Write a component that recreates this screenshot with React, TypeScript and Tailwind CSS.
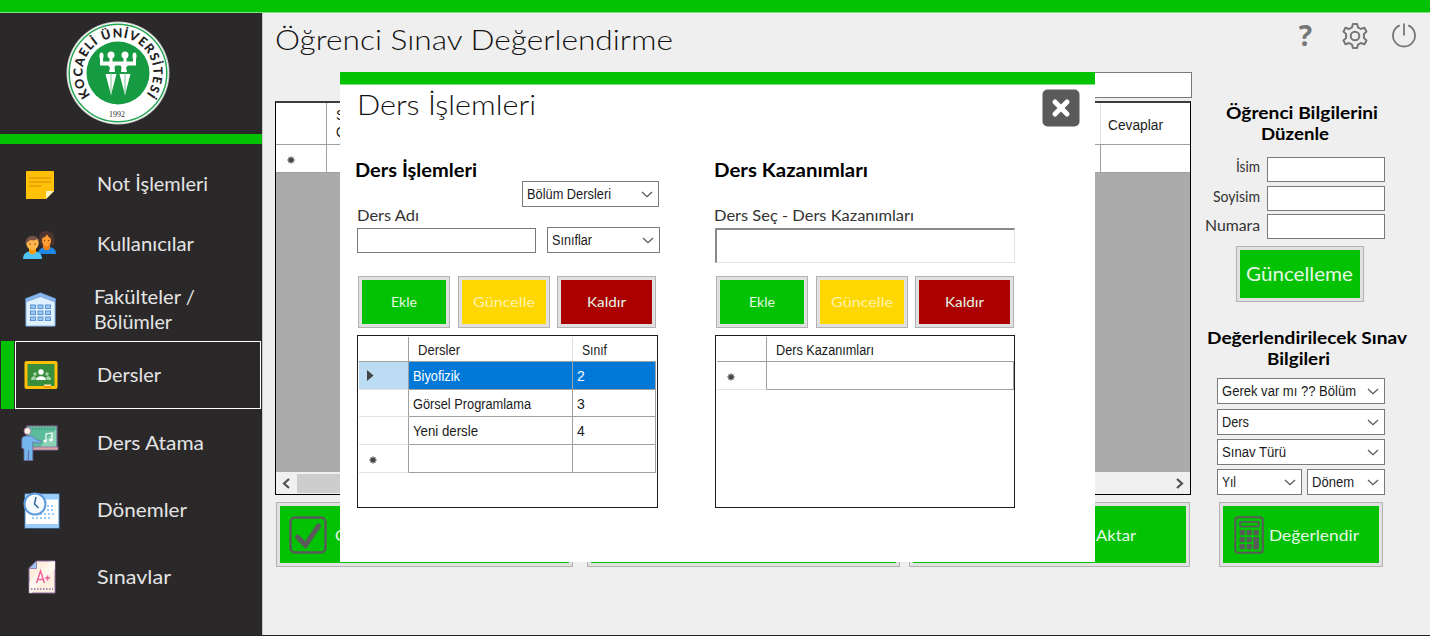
import React, { useLayoutEffect, useRef } from "react";

/* A one-line caption whose glyphs are stretched or condensed to fill `w` pixels. */
function Label({ w, className = "", children }: { w: number; className?: string; children: string }) {
  const ref = useRef<HTMLSpanElement>(null);
  useLayoutEffect(() => {
    const el = ref.current;
    if (!el) return;
    el.style.transform = "none";
    const natural = el.getBoundingClientRect().width;
    el.style.transform = `scaleX(${w / natural})`;
  }, [w, children]);
  return (
    <span className={`block shrink-0 whitespace-nowrap ${className}`} style={{ width: w }}>
      <span ref={ref} className="inline-block origin-left align-top">{children}</span>
    </span>
  );
}

const gothic = "font-['Lato',sans-serif]";
const sans = "font-['Liberation_Sans',sans-serif] text-[14px] text-[#1a1a1a]";

function Chevron() {
  return (
    <svg width="12" height="7" viewBox="0 0 12 7" className="shrink-0">
      <path d="M1 1l5 4.600L11 1" fill="none" stroke="#555" strokeWidth="1.200" />
    </svg>
  );
}

function Combo({ text, w, className }: { text: string; w: number; className: string }) {
  return (
    <div className={`flex h-[26px] shrink-0 items-center justify-between border border-[#7a7a7a] bg-white pr-[5px] pl-[4px] ${className}`}>
      <Label w={w} className={`${sans} leading-[24px]`}>{text}</Label>
      <Chevron />
    </div>
  );
}

function Button({ className, fill, children }: { className: string; fill: string; children?: React.ReactNode }) {
  return (
    <div className={`shrink-0 border border-[#b2b2b2] bg-[#e1e1e1] p-[3px] ${className}`}>
      <div className={`flex h-full items-center text-[#e6f7e6] ${fill}`}>{children}</div>
    </div>
  );
}

function NoteIcon() {
  return (
    <svg width="30" height="30" viewBox="0 0 30 30">
      <path d="M1 1h28v20l-8 8H1z" fill="#ffc107" />
      <path d="M21 29v-8h8z" fill="#fff3c0" />
      <path d="M4 8h22M4 12h22M4 16h12" stroke="#e59a00" strokeWidth="1.400" />
    </svg>
  );
}

function UsersIcon() {
  return (
    <svg width="34" height="30" viewBox="0 0 34 30">
      <path d="M16 9c0-6 3-8 7-8 6 0 9 4 8 9 1 3 0 5-2 6H18z" fill="#4e342e" />
      <path d="M15 24c0-4 3-6 6-7h6c4 1 6 3 6 7z" fill="#1e88e5" />
      <path d="M20 15h7v3c-1 3-5 3-7 0z" fill="#ef7d16" />
      <ellipse cx="23.500" cy="10.500" rx="4.500" ry="6" fill="#ff9d33" />
      <path d="M18 8c2 0 5-1 6-4 1 2 2 4 5 5V5l-5-3-5 2z" fill="#4e342e" />
      <path d="M0 29c0-5 3-7 7-8h5c4 1 7 3 7 8z" fill="#4fc3f7" />
      <path d="M6 19h7v3c-1 3-6 3-7 0z" fill="#ff9800" />
      <circle cx="9.500" cy="12.500" r="6.800" fill="#795548" />
      <path d="M3.500 13l4-3c3 1 5 0 7-1l1 4c0 4-2.500 7-6 7s-6-3-6-7z" fill="#ffb74d" />
      <circle cx="7" cy="14" r=".8" fill="#784719" />
      <circle cx="12" cy="14" r=".8" fill="#784719" />
      <circle cx="21.500" cy="10.500" r=".7" fill="#784719" />
      <circle cx="25.500" cy="10.500" r=".7" fill="#784719" />
    </svg>
  );
}

function BuildingIcon() {
  return (
    <svg width="31" height="35" viewBox="0 0 31 35">
      <path d="M1 7L15.500 1 30 7v27H1z" fill="#dff0fe" stroke="#8bb7f0" />
      <path d="M.5 6.500L15.500 1l15 5.500V10l-15-5.500L.5 10z" fill="#8bb7f0" stroke="#4e7ab5" strokeWidth=".5" />
      {[13, 19, 25].map((y) =>
        [5.5, 13, 20.5].map((x) => (
          <rect key={`${x}-${y}`} x={x} y={y} width="5" height="3.500" fill="#9cc8f5" stroke="#5e93cf" strokeWidth="1" />
        ))
      )}
    </svg>
  );
}

function ClassIcon() {
  return (
    <svg width="34" height="30" viewBox="0 0 34 30">
      <rect x=".5" y="1" width="33" height="28" rx="2" fill="#ffc107" />
      <rect x="3.500" y="4" width="27" height="22" fill="#388e3c" />
      <circle cx="17" cy="12" r="2.700" fill="#fff" />
      <path d="M12 20c0-5 10-5 10 0z" fill="#fff" />
      <circle cx="11" cy="14" r="1.700" fill="#a5d6a7" />
      <circle cx="23" cy="14" r="1.700" fill="#a5d6a7" />
      <path d="M7 20c0-5 5-4 5-2l-1 2zM27 20c0-5-5-4-5-2l1 2z" fill="#a5d6a7" />
      <path d="M20 26h7v-1.500h-7z" fill="#ffe7b0" />
      <path d="M20 26h7v2h-7z" fill="#ff9800" />
    </svg>
  );
}

function TeacherIcon() {
  return (
    <svg width="38" height="36" viewBox="0 0 38 36">
      <rect x="6" y="1" width="30" height="22" fill="#5bbd9b" stroke="#8d6c9f" />
      <path d="M19 22L35 4v18z" fill="#88d3b6" />
      <path d="M8 4h26" stroke="#3d7a67" strokeDasharray="1.500 1.500" />
      <rect x="6" y="22" width="31" height="3" fill="#dba5a8" stroke="#8d6c9f" strokeWidth=".8" />
      <path d="M25 16V9l6-1v7" fill="none" stroke="#fff" strokeWidth="1.200" />
      <circle cx="24" cy="16" r="1.600" fill="#fff" />
      <circle cx="30" cy="15" r="1.600" fill="#fff" />
      <circle cx="6.500" cy="6" r="3.500" fill="#ffeedd" stroke="#8d6c9f" strokeWidth=".8" />
      <path d="M.8 23V15c0-3 2-4 4-4h6l5 4 4 .5c1 2-1 3-3 2.500l-5-1v18.500H7.500V25l-.5 10.500H3V24z" fill="#72b8ee" stroke="#6d6c9f" strokeWidth=".8" />
    </svg>
  );
}

function TermIcon() {
  return (
    <svg width="37" height="37" viewBox="0 0 37 37">
      <rect x="2" y="2" width="34" height="34" fill="#fff" stroke="#4788c7" />
      <path d="M2.500 2.500h33v5h-33zM2.500 32h33v3.500h-33z" fill="#98ccfd" />
      <path d="M20 14h11M20 18h11M9 22h22M9 26h18" stroke="#98ccfd" strokeWidth="2" strokeDasharray="2 2" />
      <circle cx="12" cy="12" r="10.500" fill="#f5faff" stroke="#5e9ddd" strokeWidth="2" />
      <path d="M13 5l-1.500 7 4 4" fill="none" stroke="#33669c" strokeWidth="1.500" />
    </svg>
  );
}

function ExamIcon() {
  return (
    <svg width="28" height="34" viewBox="0 0 28 34">
      <path d="M8.500 1H27v32H1V8.500z" fill="#fdeee0" stroke="#8d6c9f" />
      <path d="M1.500 22L22 1.500h5V9L3 33H1.500z" fill="#fff7ee" />
      <path d="M8.500 1v7.500H1z" fill="#9bc9f2" stroke="#8d6c9f" strokeWidth=".8" />
      <path d="M3 29h22" stroke="#8d6c9f" strokeWidth="1.500" strokeDasharray="1.500 1.500" />
      <path d="M8.500 23l4-12 4 12M9.800 19.500h5.500M17 18h5M19.500 15.500v5" fill="none" stroke="#f0609a" strokeWidth="1.500" />
    </svg>
  );
}

function Logo() {
  return (
    <svg width="104" height="104" viewBox="0 0 104 104">
      <circle cx="52" cy="52" r="51.500" fill="#c9ccc9" />
      <circle cx="52" cy="52" r="50.500" fill="#fff" />
      <circle cx="52" cy="52" r="48.800" fill="none" stroke="#26a653" strokeWidth="1.500" />
      <circle cx="52" cy="52" r="31.500" fill="#169b43" />
      <defs>
        <path id="rim" d="M24.400 74.200A35.500 35.500 0 1 1 79.600 74.200" />
      </defs>
      <text fontFamily="Lato, sans-serif" fontWeight="900" fontSize="12.500" fill="#222">
        <textPath href="#rim" startOffset="0" textLength="158">KOCAELİ ÜNİVERSİTESİ</textPath>
      </text>
      <text x="51" y="95.500" textAnchor="middle" fontFamily="Liberation Serif, serif" fontSize="8" fill="#333">1992</text>
      <g fill="#fff">
        <circle cx="45" cy="34" r="3.500" />
        <circle cx="59" cy="34" r="3.500" />
        <ellipse cx="35.500" cy="35" rx="2" ry="3.500" />
        <ellipse cx="68.500" cy="35" rx="2" ry="3.500" />
        <path d="M34 38h3v2.500h6.500v-4h3v4h11v-4h3v4h6.500V38h3v6.500h-8l-2 2 1 4.500h-6l.5-5-1-1.500h-5l-1 1.500.5 5h-6l1-4.500-2-2h-8z" />
        <path d="M39.500 53h11L45 74zM53.500 53h11L59 74z" />
      </g>
      <path d="M45 52v22M59 52v22" stroke="#7cc795" strokeWidth="1" />
    </svg>
  );
}

type MenuItem = { lines: [string, number][]; icon: React.ReactNode; row: string; pad: string; active?: boolean };

const menu: MenuItem[] = [
  { lines: [["Not İşlemleri", 111]], icon: <NoteIcon />, row: "h-[60px] pb-px", pad: "ml-[25px]" },
  { lines: [["Kullanıcılar", 97]], icon: <UsersIcon />, row: "h-[59px]", pad: "ml-[23px]" },
  { lines: [["Fakülteler /", 101], ["Bölümler", 78]], icon: <BuildingIcon />, row: "h-[67px] pt-[4px]", pad: "ml-[25px]" },
  { lines: [["Dersler", 64]], icon: <ClassIcon />, row: "h-[68px]", pad: "ml-[8px]", active: true },
  { lines: [["Ders Atama", 107]], icon: <TeacherIcon />, row: "h-[68px]", pad: "ml-[21px]" },
  { lines: [["Dönemler", 90]], icon: <TermIcon />, row: "h-[67px]", pad: "ml-[23px]" },
  { lines: [["Sınavlar", 74]], icon: <ExamIcon />, row: "h-[66px]", pad: "ml-[28px]" },
];

function Sidebar() {
  return (
    <aside className="flex w-[263px] shrink-0 flex-col border-r border-[#c8c8c8] bg-[#2b2829]">
      <div className="flex h-[121px] items-start pt-[8px] pl-[66px]"><Logo /></div>
      <div className="h-[10px] shrink-0 bg-[#03c103]" />
      <nav className="flex flex-col pt-[11px]">
        {menu.map((m) => {
          const body = (
            <>
              <div className={`shrink-0 ${m.active ? "w-[81px]" : "w-[97px]"}`}>
                <div className={m.pad}>{m.icon}</div>
              </div>
              <div className={`${gothic} pb-[2px] text-[19px] leading-[25px] text-[#e4e4e4] ${m.lines.length > 1 ? "-ml-[3px]" : ""}`}>
                {m.lines.map(([t, w]) => <Label key={t} w={w}>{t}</Label>)}
              </div>
            </>
          );
          return m.active ? (
            <div key={m.lines[0][0]} className={`flex ${m.row}`}>
              <div className="ml-px w-[13px] bg-[#03c103]" />
              <div className="ml-px flex w-[246px] items-center border border-white">{body}</div>
            </div>
          ) : (
            <div key={m.lines[0][0]} className={`flex items-center ${m.row}`}>{body}</div>
          );
        })}
      </nav>
    </aside>
  );
}

function NewRowMark() {
  return (
    <svg width="8" height="8" viewBox="0 0 8 8">
      <path d="M4 .5v7M.5 4h7M1.500 1.500l5 5M6.500 1.500l-5 5" stroke="#444" strokeWidth="1.300" />
    </svg>
  );
}

function ResultsGrid() {
  return (
    <div className="mt-[3px] flex h-[394px] w-[916px] flex-col border border-t-2 border-black border-t-[#3c3c3c] bg-[#ababab]">
      <div className="flex h-[42px] shrink-0 border-b border-[#a0a0a0] bg-white">
        <div className="w-[51px] border-r border-[#a0a0a0]" />
        <div className={`w-[774px] border-r border-[#e0e0e0] pt-[4px] pl-[9px] leading-[17px] ${sans}`}>
          <Label w={9}>S</Label>
          <Label w={10}>O</Label>
        </div>
        <div className="pt-[13px] pl-[7px]"><Label w={55} className={`${sans} leading-[18px]`}>Cevaplar</Label></div>
      </div>
      <div className="flex h-[28px] shrink-0 border-b border-[#a0a0a0] bg-white">
        <div className="flex w-[51px] items-center border-r border-[#a0a0a0] pt-[2px] pl-[11px]"><NewRowMark /></div>
        <div className="w-[774px] border-r border-[#a0a0a0]" />
      </div>
      <div className="mt-auto flex h-[22px] items-center justify-between bg-[#f0f0f0]">
        <svg width="21" height="21" viewBox="0 0 21 21"><path d="M13 6l-5 4.500 5 4.500" fill="none" stroke="#505050" strokeWidth="2.200" /></svg>
        <div className="mr-auto h-[19px] w-[560px] bg-[#cdcdcd]" />
        <svg width="21" height="21" viewBox="0 0 21 21"><path d="M8 6l5 4.500L8 15" fill="none" stroke="#505050" strokeWidth="2.200" /></svg>
      </div>
    </div>
  );
}

function CalculatorIcon() {
  return (
    <svg width="30" height="38" viewBox="0 0 30 38">
      <rect x="1.200" y="1.200" width="27.600" height="35.600" rx="3" fill="none" stroke="#5a5a5a" strokeWidth="2" />
      <rect x="6" y="6" width="18.500" height="4.500" fill="none" stroke="#5a5a5a" strokeWidth="1.700" />
      {[14, 21, 28].map((y) => [5.5, 12.5, 19.5].map((x) => <rect key={`${x}-${y}`} x={x} y={y} width="5.300" height="5.300" rx="1" fill="#5a5a5a" />))}
      <rect x="19.500" y="21" width="5.300" height="12.300" rx="1" fill="#5a5a5a" />
    </svg>
  );
}

function Field({ text, w, className, top }: { text: string; w: number; className: string; top: string }) {
  return (
    <div className={`flex w-[192px] justify-end ${className}`}>
      <Label w={w} className={`${gothic} ${top} text-[14.500px] leading-[20px] text-[#333]`}>{text}</Label>
      <div className="ml-[7px] h-[25px] w-[118px] border border-[#7a7a7a] bg-white" />
    </div>
  );
}

function SidePanel() {
  const heading = `${gothic} text-[17px] font-bold leading-[21px] text-black`;
  return (
    <section className="flex w-[237px] flex-col">
      <Label w={152} className={`${heading} mt-[30px] ml-[33px]`}>Öğrenci Bilgilerini</Label>
      <Label w={68} className={`${heading} ml-[68px]`}>Düzenle</Label>
      <Field text="İsim" w={24} className="mt-[13px]" top="" />
      <Field text="Soyisim" w={47} className="mt-[4px]" top="pt-px" />
      <Field text="Numara" w={55} className="mt-[3px]" top="pt-[2px]" />
      <Button className="mt-[7px] ml-[43px] h-[56px] w-[128px]" fill="bg-[#03c103]">
        <Label w={107} className={`${gothic} ml-[6px] text-[19px] leading-[24px]`}>Güncelleme</Label>
      </Button>
      <Label w={200} className={`${heading} mt-[25px] ml-[14px]`}>Değerlendirilecek Sınav</Label>
      <Label w={63} className={`${heading} ml-[74px]`}>Bilgileri</Label>
      <div className="ml-[24px] flex w-[168px] flex-col pt-[9px]">
        <Combo text="Gerek var mı ?? Bölüm" w={134} className="" />
        <Combo text="Ders" w={27} className="mt-[5px]" />
        <Combo text="Sınav Türü" w={64} className="mt-[4px]" />
        <div className="mt-[4px] flex justify-between">
          <Combo text="Yıl" w={14} className="w-[85px]" />
          <Combo text="Dönem" w={42} className="w-[78px]" />
        </div>
      </div>
      <Button className="mt-[7px] ml-[26px] h-[65px] w-[164px]" fill="bg-[#03c103]">
        <span className="ml-[11px] block"><CalculatorIcon /></span>
        <Label w={90} className={`${gothic} ml-[5px] text-[16px] leading-[22px]`}>Değerlendir</Label>
      </Button>
    </section>
  );
}

function CrudButtons({ className }: { className: string }) {
  const face = `${gothic} text-[14px] leading-[20px] mx-auto`;
  return (
    <div className={`flex justify-between ${className}`}>
      <Button className="h-[52px] w-[92px]" fill="bg-[#03c103]"><Label w={26} className={face}>Ekle</Label></Button>
      <Button className="h-[52px] w-[92px]" fill="bg-[#ffd700]"><Label w={62} className={`${face} text-[#fff3b0]`}>Güncelle</Label></Button>
      <Button className="h-[52px] w-[99px]" fill="bg-[#aa0000]"><Label w={39} className={face}>Kaldır</Label></Button>
    </div>
  );
}

function CoursesGrid() {
  const rows: [string, string, number][] = [["Biyofizik", "2", 47], ["Görsel Programlama", "3", 118], ["Yeni dersle", "4", 65]];
  return (
    <div className={`mt-[7px] ml-[17px] h-[173px] w-[301px] border border-[#1c1c1c] bg-white ${sans}`}>
      <div className="mt-px ml-px w-[297px]">
        <div className="flex h-[25px] border-b border-[#a0a0a0] leading-[26px]">
          <div className="w-[50px] border-r border-[#a0a0a0]" />
          <div className="w-[164px] border-r border-[#e0e0e0] pl-[9px]"><Label w={42}>Dersler</Label></div>
          <div className="pl-[9px]"><Label w={25}>Sınıf</Label></div>
        </div>
        {rows.map(([name, cls, w], i) => (
          <div key={name} className={`flex leading-[28px] ${i === 0 ? "h-[28px] text-white" : i === 1 ? "h-[27px]" : "h-[28px]"}`}>
            <div className={`flex w-[50px] items-center border-r border-b border-r-[#a0a0a0] border-b-[#e3e3e3] pl-[8px] ${i === 0 ? "bg-[#bcdcf4]" : ""}`}>
              {i === 0 && <svg width="7" height="11" viewBox="0 0 7 11"><path d="M0 0l6.500 5.500L0 11z" fill="#444" /></svg>}
            </div>
            <div className={`w-[164px] border-r border-b border-[#a0a0a0] pl-[4px] ${i === 0 ? "bg-[#0078d7]" : ""}`}><Label w={w}>{name}</Label></div>
            <div className={`w-[83px] border-r border-b border-[#a0a0a0] pl-[4px] ${i === 0 ? "bg-[#0078d7]" : ""}`}>{cls}</div>
          </div>
        ))}
        <div className="flex h-[28px]">
          <div className="flex w-[50px] items-center border-r border-b border-r-[#a0a0a0] border-b-[#e3e3e3] pt-[2px] pl-[10px]"><NewRowMark /></div>
          <div className="w-[164px] border-r border-b border-[#a0a0a0]" />
          <div className="w-[83px] border-r border-b border-[#a0a0a0]" />
        </div>
      </div>
    </div>
  );
}

function OutcomesGrid() {
  return (
    <div className={`mt-[7px] h-[173px] w-[300px] border border-[#1c1c1c] bg-white ${sans}`}>
      <div className="mt-px ml-px w-[297px]">
        <div className="flex h-[25px] border-b border-[#a0a0a0] leading-[26px]">
          <div className="w-[50px] border-r border-[#a0a0a0]" />
          <div className="pl-[9px]"><Label w={98}>Ders Kazanımları</Label></div>
        </div>
        <div className="flex h-[28px]">
          <div className="flex w-[50px] items-center border-r border-b border-r-[#a0a0a0] border-b-[#e3e3e3] pt-[2px] pl-[10px]"><NewRowMark /></div>
          <div className="w-[247px] border-r border-b border-[#a0a0a0]" />
        </div>
      </div>
    </div>
  );
}

function CourseDialog() {
  const heading = `${gothic} text-[19px] font-bold leading-[24px] text-black`;
  const caption = `${gothic} text-[15.500px] leading-[20px] text-[#333]`;
  return (
    <div className="absolute top-[72px] left-[340px] flex h-[490px] w-[755px] flex-col bg-white">
      <div className="h-[13px] shrink-0 border-b border-[#7fe07f] bg-[#03c103]" />
      <div className="flex h-[73px] shrink-0 items-start justify-between pr-[15px] pl-[17px]">
        <Label w={179} className={`${gothic} mt-[2px] text-[28px] leading-[34px] font-light text-[#111]`}>Ders İşlemleri</Label>
        <svg width="38" height="38" viewBox="0 0 38 38" className="mt-[4px]">
          <rect x=".5" y=".5" width="37" height="37" rx="5" fill="#5a5a5a" />
          <path d="M13 13l12 12M25 13l-12 12" stroke="#fff" strokeWidth="5" strokeLinecap="round" />
        </svg>
      </div>
      <div className="flex">
        <div className="w-[375px]">
          <Label w={122} className={`${heading} ml-[15px]`}>Ders İşlemleri</Label>
          <Combo text="Bölüm Dersleri" w={84} className="-mt-px ml-[182px] w-[137px]" />
          <Label w={62} className={`${caption} -mt-[2px] ml-[17px]`}>Ders Adı</Label>
          <div className="mt-[2px] ml-[17px] flex w-[303px] items-end justify-between">
            <div className="h-[25px] w-[179px] border border-[#7a7a7a] bg-white" />
            <Combo text="Sınıflar" w={40} className="w-[113px]" />
          </div>
          <CrudButtons className="mt-[23px] ml-[18px] w-[298px]" />
          <CoursesGrid />
        </div>
        <div>
          <Label w={154} className={`${heading} -ml-px`}>Ders Kazanımları</Label>
          <Label w={200} className={`${caption} mt-[23px] -ml-px`}>Ders Seç - Ders Kazanımları</Label>
          <div className="mt-[3px] h-[35px] w-[300px] border border-t-2 border-l-2 border-[#e3e3e3] border-t-[#8a8a8a] border-l-[#8a8a8a] bg-white" />
          <CrudButtons className="mt-[13px] ml-px w-[298px]" />
          <OutcomesGrid />
        </div>
      </div>
    </div>
  );
}

export default function App() {
  return (
    <div className="relative flex h-[636px] w-[1430px] flex-col overflow-hidden border-b border-[#222] bg-[#efefef]">
      <div className="h-[13px] shrink-0 border-b border-[#7fe07f] bg-[#03c103]" />
      <div className="flex h-[622px] shrink-0">
        <Sidebar />
        <main className="flex w-[1167px] flex-col">
          <header className="flex h-[59px] shrink-0 items-start pr-[13px] pl-[12px]">
            <Label w={398} className={`${gothic} mt-[9px] text-[28px] leading-[34px] font-light text-[#111]`}>Öğrenci Sınav Değerlendirme</Label>
            <span className="mt-[6px] ml-auto font-['Open_Sans',sans-serif] text-[28px] leading-[32px] font-bold text-[#767676]">?</span>
            <svg width="28" height="28" viewBox="0 0 28 28" className="mt-[9px] ml-[29px]" fill="none" stroke="#767676" strokeWidth="2" strokeLinejoin="round">
              <path d="M11.900 2h4.200l.9 3.400 2.800 1.600 3.700-1.200 2 3.700-2.600 2.600v3.800l2.600 2.600-2 3.700-3.700-1.200-2.800 1.600-.9 3.400h-4.200l-.9-3.400-2.800-1.600-3.700 1.200-2-3.700 2.600-2.600v-3.800L2.500 9.500l2-3.700L8.200 7 11 5.400z" />
              <circle cx="14" cy="14" r="4.300" />
            </svg>
            <svg width="26" height="26" viewBox="0 0 26 26" className="mt-[9px] ml-[22px]" fill="none" stroke="#767676" strokeWidth="1.800">
              <path d="M8.700 3.400a11 11 0 1 0 8.600 0M13 1.500v12" />
            </svg>
          </header>
          <div className="flex">
            <section className="flex w-[930px] flex-col pl-[12px]">
              <div className="ml-[317px] h-[26px] w-[600px] border border-[#7a7a7a] bg-white" />
              <ResultsGrid />
              <div className={`mt-[7px] ml-px flex ${gothic} text-[16px] leading-[22px]`}>
                <Button className="h-[65px] w-[297px]" fill="bg-[#03c103]">
                  <svg width="38" height="38" viewBox="0 0 38 38" className="ml-[9px]">
                    <rect x="1.500" y="1.500" width="35" height="35" rx="4.500" fill="none" stroke="#5a5a5a" strokeWidth="2.500" />
                    <path d="M8.500 21l8 8L29.500 10" fill="none" stroke="#5a5a5a" strokeWidth="5" strokeLinecap="round" />
                  </svg>
                  <Label w={13} className="ml-[8px]">O</Label>
                </Button>
                <Button className="ml-[14px] h-[65px] w-[313px]" fill="bg-[#03c103]" />
                <Button className="ml-[9px] h-[65px] w-[281px]" fill="bg-[#03c103]">
                  <Label w={40} className="mr-[50px] ml-auto">Aktar</Label>
                </Button>
              </div>
            </section>
            <SidePanel />
          </div>
        </main>
      </div>
      <CourseDialog />
    </div>
  );
}
